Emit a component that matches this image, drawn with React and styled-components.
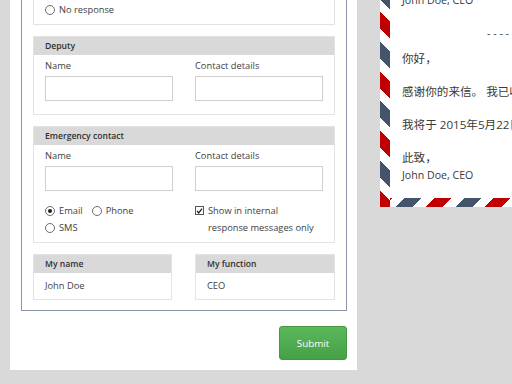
import React from "react";
import styled, { createGlobalStyle } from "styled-components";

const GlobalStyle = createGlobalStyle`
  body {
    margin: 0;
    background: #d9d9d9;
    font-family: "Open Sans", "Noto Sans CJK SC", sans-serif;
  }
  * {
    box-sizing: border-box;
  }
`;

function App() {
  return (
    <>
      <GlobalStyle />
      <Page>
        <FormPanel>
          <Frame>
            <Section>
              <SectionHeader>Response</SectionHeader>
              <OptionList>
                <Choice>
                  <Radio />
                  Yes
                </Choice>
                <Choice>
                  <Radio />
                  No
                </Choice>
                <Choice>
                  <Radio />
                  No response
                </Choice>
              </OptionList>
            </Section>

            <Section>
              <SectionHeader>Deputy</SectionHeader>
              <FieldGrid $bottom={13}>
                <Field label="Name" />
                <Field label="Contact details" />
              </FieldGrid>
            </Section>

            <Section>
              <SectionHeader>Emergency contact</SectionHeader>
              <FieldGrid $bottom={6}>
                <Field label="Name" />
                <Field label="Contact details" />
                <Options>
                  <Choice>
                    <Radio $checked />
                    Email
                  </Choice>
                  <Choice>
                    <Radio />
                    Phone
                  </Choice>
                  <Choice>
                    <Radio />
                    SMS
                  </Choice>
                </Options>
                <Options>
                  <CheckRow>
                    <CheckBox>
                      <svg width="8" height="8" viewBox="0 0 8 8">
                        <polyline
                          points="1.2,4 3.1,6.2 6.9,1.3"
                          fill="none"
                          stroke="#222"
                          strokeWidth="1.4"
                        />
                      </svg>
                    </CheckBox>
                    <span>
                      Show in internal
                      <br />
                      response messages only
                    </span>
                  </CheckRow>
                </Options>
              </FieldGrid>
            </Section>

            <InfoRow>
              <InfoBox>
                <SectionHeader>My name</SectionHeader>
                <InfoValue>John Doe</InfoValue>
              </InfoBox>
              <InfoBox>
                <SectionHeader>My function</SectionHeader>
                <InfoValue>CEO</InfoValue>
              </InfoBox>
            </InfoRow>
          </Frame>
          <Actions>
            <SubmitButton>Submit</SubmitButton>
          </Actions>
        </FormPanel>

        <Envelope>
          <Letter>
            <p>John Doe, CEO</p>
            <Separator>- - - - - - - - - - - - - - - -</Separator>
            <Para $cjk>你好，</Para>
            <Para $cjk>感谢你的来信。 我已收到你的消息。</Para>
            <Para $cjk>我将于 2015年5月22日回来。</Para>
            <Para>
              <CjkText>此致，</CjkText>
              <br />
              John Doe, CEO
            </Para>
          </Letter>
        </Envelope>
      </Page>
    </>
  );
}

const Field = ({ label }) => {
  return (
    <FieldStyle>
      <label>{label}</label>
      <TextInput />
    </FieldStyle>
  );
};

const Page = styled.div`
  width: 512px;
  height: 384px;
  overflow: hidden;
  display: flex;
  align-items: flex-start;
`;

const FormPanel = styled.div`
  flex: none;
  width: 347px;
  margin: -68px 0 0 10px;
  padding: 0 10px 10px 11px;
  background: #fff;
  font-size: 9.3px;
  color: #404040;
`;

const Frame = styled.div`
  border: 1px solid #8c95aa;
  padding: 11px 11px 10px;
  display: flex;
  flex-direction: column;
  gap: 11px;
`;

const Section = styled.div`
  border: 1px solid #e3e3e3;
  background: #fff;
`;

const SectionHeader = styled.div`
  height: 18px;
  line-height: 18px;
  padding: 0 11px;
  background: #d9d9d9;
  font-weight: 600;
  font-size: 8.6px;
  color: #303030;
`;

const OptionList = styled.div`
  padding: 4px 11px 6px;
  display: flex;
  flex-direction: column;
`;

const FieldGrid = styled.div`
  display: grid;
  grid-template-columns: 128px 128px;
  column-gap: 22px;
  padding: 3px 11px ${(p) => p.$bottom}px;
`;

const FieldStyle = styled.div`
  display: flex;
  flex-direction: column;
  label {
    line-height: 15px;
    margin-bottom: 3px;
  }
`;

const TextInput = styled.div`
  height: 25px;
  border: 1px solid #cfcfcf;
  background: #fff;
`;

const Options = styled.div`
  margin-top: 11px;
  display: flex;
  flex-wrap: wrap;
  align-content: flex-start;
  column-gap: 9px;
`;

const Choice = styled.div`
  display: flex;
  align-items: center;
  gap: 4px;
  line-height: 17px;
`;

const Radio = styled.span`
  position: relative;
  width: 10px;
  height: 10px;
  border: 1px solid #6d6d6d;
  border-radius: 50%;
  background: #fff;
  &::after {
    content: "";
    display: ${(p) => (p.$checked ? "block" : "none")};
    position: absolute;
    left: 2px;
    top: 2px;
    width: 4px;
    height: 4px;
    border-radius: 50%;
    background: #1e1e1e;
  }
`;

const CheckRow = styled.div`
  display: flex;
  align-items: flex-start;
  gap: 4px;
  line-height: 17px;
`;

const CheckBox = styled.span`
  flex: none;
  width: 9px;
  height: 9px;
  margin-top: 4px;
  border: 1px solid #555;
  display: flex;
  align-items: center;
  justify-content: center;
  background: #fff;
`;

const InfoRow = styled.div`
  display: grid;
  grid-template-columns: 139px 140px;
  column-gap: 23px;
`;

const InfoBox = styled.div`
  border: 1px solid #e3e3e3;
`;

const InfoValue = styled.div`
  height: 26px;
  line-height: 26px;
  padding: 0 11px;
`;

const Actions = styled.div`
  display: flex;
  justify-content: flex-end;
  margin-top: 15px;
`;

const SubmitButton = styled.button`
  width: 68px;
  height: 34px;
  border: 1px solid #40993f;
  border-radius: 3px;
  background: linear-gradient(#5cb85c, #46a046);
  color: #fff;
  font-family: "Open Sans", sans-serif;
  font-size: 9.8px;
  padding: 0;
`;

const stripes = (angle) => `repeating-linear-gradient(
    ${angle},
    #c00000 0 12px,
    #fff 12px 21px,
    #44546a 21px 33px,
    #fff 33px 42px
  )`;

const Envelope = styled.div`
  flex: none;
  width: 300px;
  margin: -28px 0 0 23px;
  padding: 0 0 9px 10px;
  background: ${stripes("45deg")} left top / 10px 100% no-repeat,
    ${stripes("-45deg")} left bottom / 100% 9px no-repeat, #fff;
`;

const Letter = styled.div`
  background: #fff;
  padding: 20px 12px 14px;
  font-size: 10.6px;
  line-height: 17px;
  color: #3a3a3a;
  p {
    margin: 0 0 16px;
    white-space: nowrap;
  }
  p:last-child {
    margin-bottom: 0;
  }
`;

const Para = styled.p`
  font-size: ${(p) => (p.$cjk ? "11.6px" : "inherit")};
`;

const CjkText = styled.span`
  font-size: 11.6px;
`;

const Separator = styled.div`
  text-align: center;
  margin-bottom: 8px;
  white-space: nowrap;
`;

export default App;
